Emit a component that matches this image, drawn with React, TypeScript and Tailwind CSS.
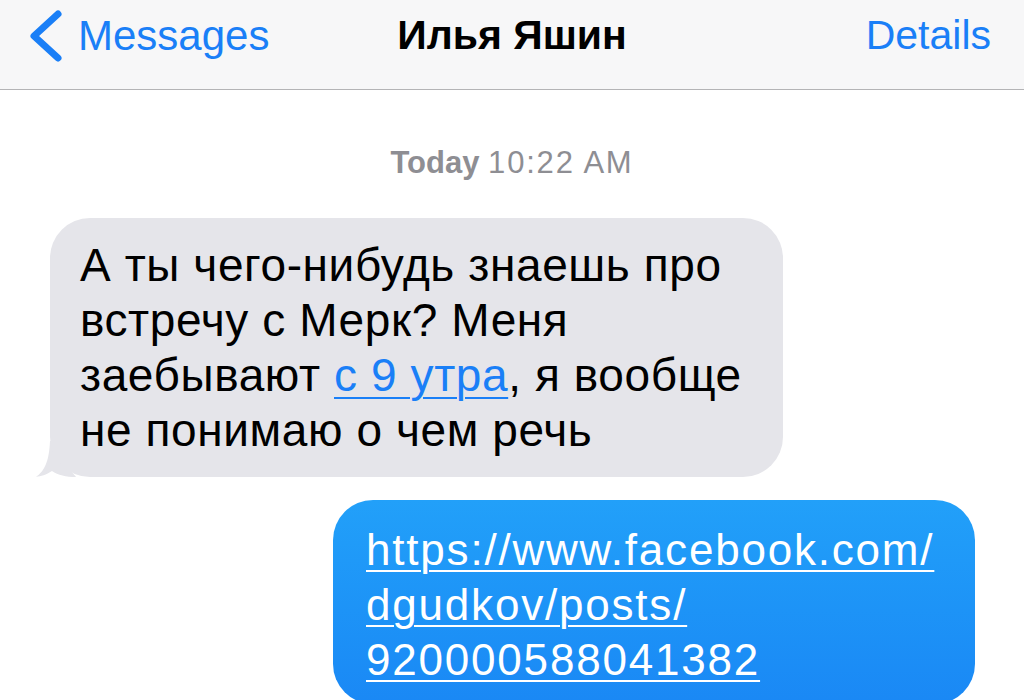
import React from "react";

const font = { fontFamily: '"Liberation Sans", Arial, Helvetica, sans-serif' };

function Chevron() {
    return (
        <svg width="36" height="54" viewBox="0 0 36 54" className="shrink-0 ml-[-6px]">
            <path d="M31 5 L7 27 L31 49" fill="none" stroke="#1a7ff7" strokeWidth="7" strokeLinecap="round" strokeLinejoin="round" />
        </svg>
    );
}

function Tail() {
    return (
        <svg width="40" height="36" viewBox="0 0 40 36" className="absolute left-[-14px] bottom-0">
            <path d="M14 0 L30 0 L30 22 C 34 30, 38 33, 40 36 C 30 36, 22 34, 16 30 C 10 34, 5 35, 0 36 C 8 30, 13 22, 14 0 Z" fill="#e5e5ea" />
        </svg>
    );
}

export default function App() {
    return (
        <div className="w-[1024px] h-[700px] bg-white overflow-hidden" style={font}>
            {/* nav bar */}
            <div className="h-[90px] bg-[#f7f7f8] border-b border-[#b4b4b6] grid grid-cols-3 items-center px-[33px] pb-[18px]">
                <div className="flex items-center gap-[15px] text-[#1a7ff7] text-[42px]">
                    <Chevron />
                    <span>Messages</span>
                </div>
                <div className="text-center text-black text-[41px] font-bold">Илья Яшин</div>
                <div className="text-right text-[#1a7ff7] text-[41px]">Details</div>
            </div>

            {/* thread */}
            <div className="flex flex-col pt-[55px]">
                <div className="text-center text-[#8e8e93] text-[31px] leading-[36px]">
                    <span className="font-bold">Today</span> <span className="tracking-[1.8px]">10:22 AM</span>
                </div>

                <div className="mt-[37px] ml-[50px] relative self-start">
                    <Tail />
                    <div className="relative w-[733px] bg-[#e5e5ea] rounded-[40px] pl-[30px] pr-[20px] pt-[20px] pb-[19px] text-black text-[46px] leading-[55px] tracking-[0.6px]">
                        А ты чего-нибудь знаешь про<br />
                        встречу с Мерк? Меня<br />
                        заебывают <span className="text-[#1a7ff7] underline decoration-2 underline-offset-[6px]">с 9 утра</span>, я вообще<br />
                        не понимаю о чем речь
                    </div>
                </div>

                <div className="mt-[23px] mr-[49px] self-end w-[642px] rounded-[40px] bg-gradient-to-b from-[#22a0f9] to-[#1a88f5] pl-[33px] pr-[20px] pt-[22px] pb-[17px] text-white text-[44px] leading-[55px] tracking-[1.8px]">
                    <span className="underline decoration-2 underline-offset-[5px]">
                        https://www.facebook.com/<br />
                        dgudkov/posts/<br />
                        920000588041382
                    </span>
                </div>
            </div>
        </div>
    );
}
